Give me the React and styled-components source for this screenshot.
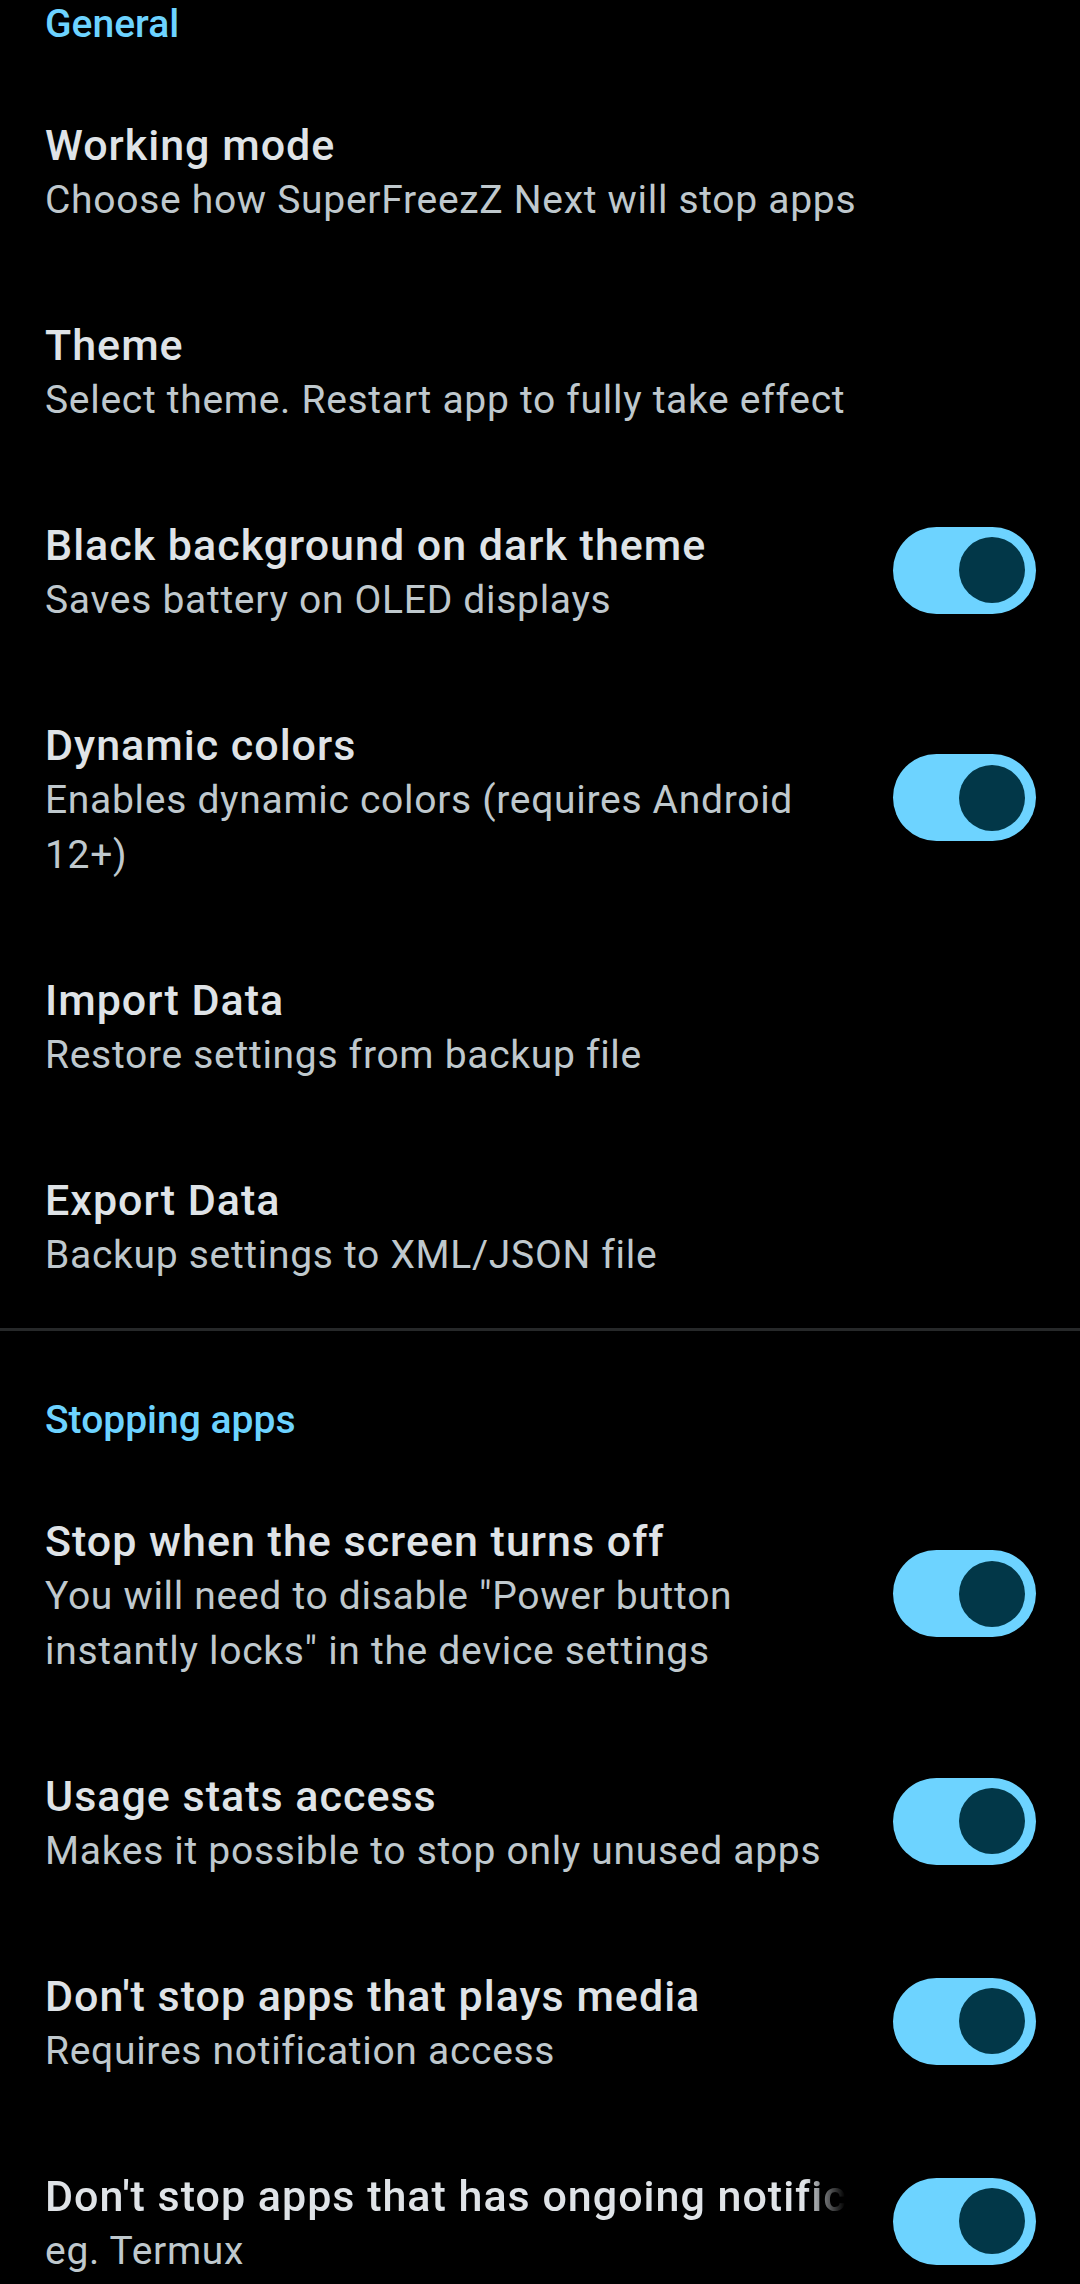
import React from 'react';
import styled, { createGlobalStyle } from 'styled-components';

const GlobalStyle = createGlobalStyle`
  html, body {
    margin: 0;
    padding: 0;
    background: #000000;
  }
  body {
    font-family: Roboto, "Noto Sans", sans-serif;
    -webkit-font-smoothing: antialiased;
  }
`;

/* ─── Layout ─────────────────────────────────────────────────── */

const Screen = styled.div`
  width: 1080px;
  height: 2284px;
  overflow: hidden;
  background: #000000;
`;

// the list is scrolled a little, so the first header sits at the very top
const List = styled.div`
  display: flex;
  flex-direction: column;
  margin-top: -65px;
`;

const Category = styled.section`
  display: flex;
  flex-direction: column;
  border-bottom: ${p => (p.$divider ? '3px solid #262829' : 'none')};
`;

const CategoryTitle = styled.div`
  padding: 66px 45px 26px;
  font-size: 39px;
  line-height: 46px;
  font-weight: 500;
  color: #6dd3ff;
`;

/* ─── Preference row ─────────────────────────────────────────── */

const Row = styled.div`
  display: flex;
  align-items: center;
  gap: 48px;
  padding: 45px 44px 45px 45px;
`;

const Texts = styled.div`
  flex: 1;
  min-width: 0;
  display: flex;
  flex-direction: column;
`;

const Title = styled.div`
  font-size: 43px;
  line-height: 55px;
  font-weight: 500;
  letter-spacing: 1px;
  color: #dfe3e7;
  white-space: nowrap;
  overflow: hidden;
  -webkit-mask-image: ${p =>
    p.$fade ? 'linear-gradient(to right, #000 calc(100% - 40px), transparent)' : 'none'};
  mask-image: ${p =>
    p.$fade ? 'linear-gradient(to right, #000 calc(100% - 40px), transparent)' : 'none'};
`;

const Summary = styled.div`
  font-size: 39px;
  line-height: 55px;
  font-weight: 400;
  color: #bfc8cd;
  letter-spacing: 0.7px;
`;

/* ─── Switch ─────────────────────────────────────────────────── */

const Track = styled.div`
  flex: none;
  width: 143px;
  height: 87px;
  box-sizing: border-box;
  border-radius: 44px;
  background: #6dd3ff;
  display: flex;
  align-items: center;
  justify-content: flex-end;
  padding-right: 11px;
  margin-top: -6px;
`;

const Thumb = styled.div`
  width: 66px;
  height: 66px;
  border-radius: 50%;
  background: #023748;
`;

function Switch() {
  return (
    <Track>
      <Thumb />
    </Track>
  );
}

function Pref({ title, summary, toggle, fade }) {
  return (
    <Row>
      <Texts>
        <Title $fade={fade}>{title}</Title>
        {summary && <Summary>{summary}</Summary>}
      </Texts>
      {toggle && <Switch />}
    </Row>
  );
}

/* ─── Data ───────────────────────────────────────────────────── */

const general = [
  { title: 'Working mode', summary: 'Choose how SuperFreezZ Next will stop apps' },
  { title: 'Theme', summary: 'Select theme. Restart app to fully take effect' },
  { title: 'Black background on dark theme', summary: 'Saves battery on OLED displays', toggle: true },
  { title: 'Dynamic colors', summary: 'Enables dynamic colors (requires Android 12+)', toggle: true },
  { title: 'Import Data', summary: 'Restore settings from backup file' },
  { title: 'Export Data', summary: 'Backup settings to XML/JSON file' },
];

const stopping = [
  {
    title: 'Stop when the screen turns off',
    summary: 'You will need to disable "Power button instantly locks" in the device settings',
    toggle: true,
  },
  { title: 'Usage stats access', summary: 'Makes it possible to stop only unused apps', toggle: true },
  { title: "Don't stop apps that plays media", summary: 'Requires notification access', toggle: true },
  {
    title: "Don't stop apps that has ongoing notifications",
    summary: 'eg. Termux',
    toggle: true,
    fade: true,
  },
];

export default function App() {
  return (
    <Screen>
      <GlobalStyle />
      <List>
        <Category $divider>
          <CategoryTitle>General</CategoryTitle>
          {general.map(p => <Pref key={p.title} {...p} />)}
        </Category>
        <Category>
          <CategoryTitle>Stopping apps</CategoryTitle>
          {stopping.map(p => <Pref key={p.title} {...p} />)}
        </Category>
      </List>
    </Screen>
  );
}
